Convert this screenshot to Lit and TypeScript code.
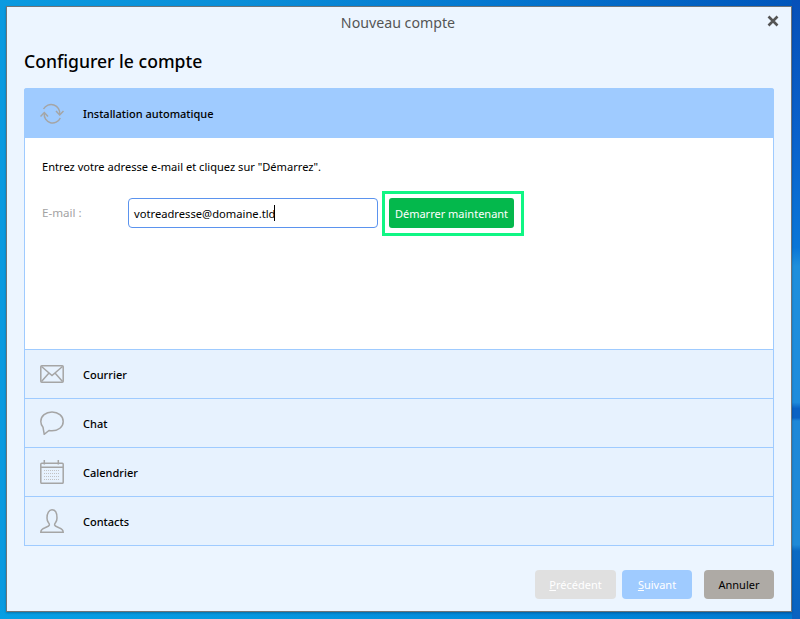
import { LitElement, html, css, svg } from "lit";
import { customElement } from "lit/decorators.js";

const icons: Record<string, unknown> = {
  sync: svg`<path d="M3.500 7A8.700 8.700 0 0 1 19.700 12.500"/><path d="M16 9l3.700 4 3.800-4"/><path d="M4.300 11.500A8.400 8.400 0 0 0 20.300 16"/><path d="M.5 14.500l3.800-4 3.700 4"/>`,
  mail: svg`<rect x=".8" y="3.800" width="22.400" height="16.400" rx="1"/><path d="M1.500 4.500l10.500 9 10.500-9M1.500 19.500l7.500-8.500M22.500 19.500L15 11"/>`,
  chat: svg`<path d="M3 16.200C1.700 14.700 .8 12.700.8 10.500.8 5 5.800 1 12 1s11.200 4 11.200 9.500S18.200 19.800 12 19.800c-1 0-2-.1-3-.3L4.200 23.300z"/>`,
  cal: svg`<rect x=".8" y="3.300" width="22.400" height="20" rx="1"/><path d="M1 7.300h22M4.300 0v4.500M18.300 0v4.500"/><path class="dots" d="M4 10.500h16M4 13.500h16M4 16.500h16M4 19.500h16"/>`,
  user: svg`<path d="M.8 23.200c0-2.700 2-3.700 4.200-4.500 2-.8 4-1.200 4.400-2.700.2-.8-.3-1.600-1-2.500C7.500 12.300 7 10.900 7 9 7 4 9 .8 12 .8S17 4 17 9c0 1.900-.5 3.300-1.400 4.500-.7.900-1.200 1.700-1 2.500.4 1.500 2.400 1.900 4.400 2.700 2.200.8 4.200 1.800 4.200 4.500z"/>`,
};

@customElement("app-root")
export class AppRoot extends LitElement {
  static styles = css`
    :host { display: block; width: 800px; height: 619px; overflow: hidden; font-family: "Noto Sans", "Open Sans", sans-serif; font-size: 11.1px; color: #000; }
    .desk {
      box-sizing: border-box; height: 619px; padding: 6px 8px 7px 6px;
      background:
        linear-gradient(180deg, #0650b8 0%, #0a62cc 22%, #0a76d8 40%, #1e8fdc 43%, #1e8cdc 65%, #0a62c4 66%, #0a62c4 67.500%, #1e88d8 68%, #1e8ad8 88%, #0a6ac4 89%, #0a62c0 100%) right top / 8px 100% no-repeat,
        linear-gradient(180deg, transparent 97%, rgba(0, 165, 234, .5) 100%),
        linear-gradient(90deg, #0a9ae0 0%, #0a8ed8 30%, #0478d0 60%, #0055bb 100%);
    }
    .win { box-sizing: border-box; height: 606px; border: 1px solid #6f7478; background: #ecf5ff; display: flex; flex-direction: column; padding: 0 17px; position: relative; box-shadow: 0 1px 2px rgba(0, 0, 0, .25); }
    .title { height: 30px; padding-right: 2px; display: flex; align-items: center; justify-content: center; font-size: 14.200px; color: #555; }
    .close { position: absolute; right: 12px; top: 8px; width: 12px; height: 12px; }
    .close path { stroke: #555; stroke-width: 2.600; fill: none; }
    h1 { margin: 13px 0 0; height: 38px; font-size: 17.600px; font-weight: 500; line-height: 22px; }
    .acc { border: 1px solid #9fcbff; border-top: 0; border-radius: 3px 3px 0 0; display: flex; flex-direction: column; background: #e7f2fe; }
    .row { box-sizing: border-box; height: 49px; display: flex; align-items: center; padding-left: 15px; gap: 19px; font-size: 11px; font-weight: 500; border-top: 1px solid #9fcbff; }
    .row:first-child { height: 50px; background: #9fcbff; border-radius: 3px 3px 0 0; margin: 0 -1px; padding-left: 16px; }
    .row svg { width: 24px; height: 24px; fill: none; stroke: #a5a5a5; stroke-width: 1.500; flex: none; }
    .row .dots { stroke: #c2c2c2; stroke-dasharray: 1 1; stroke-width: 1; }
    .body { box-sizing: border-box; height: 211px; background: #fff; padding: 21px 17px 0; }
    .body p { margin: 0; line-height: 16px; }
    .form { display: flex; align-items: flex-start; margin-top: 16px; }
    .form label { width: 86px; color: #a3a3a3; flex: none; line-height: 30px; margin-top: 7px; font-size: 11.600px; }
    .input { box-sizing: border-box; width: 250px; height: 30px; margin-top: 7px; border: 1px solid #5b93ee; border-radius: 4px; padding-left: 5px; display: flex; align-items: center; font-size: 11.200px; }
    .caret { width: 1px; height: 16px; background: #000; margin-left: -1px; }
    .hl { margin-left: 4px; border: 3px solid #10f684; padding: 4px 7px 5px 4px; display: flex; }
    .go { background: #04b84c; color: #fff; height: 30px; width: 125px; border-radius: 3px; display: flex; align-items: center; justify-content: center; font-size: 11px; }
    .foot { margin-top: 24px; display: flex; justify-content: flex-end; font-size: 11px; }
    .btn { box-sizing: border-box; height: 29px; border-radius: 4px; display: flex; align-items: center; justify-content: center; }
    .prev { width: 81px; background: #e0e0e0; color: #fff; }
    .next { width: 70px; background: #9fcbff; color: #fff; margin-left: 6px; }
    .cancel { width: 70px; background: #aeaaa5; margin-left: 12px; }
    u { text-decoration: underline; }
  `;

  render() {
    const rows = [["mail", "Courrier"], ["chat", "Chat"], ["cal", "Calendrier"], ["user", "Contacts"]];
    return html`<div class="desk"><div class="win">
      <div class="title">Nouveau compte</div>
      <svg class="close" viewBox="0 0 12 12"><path d="M1.500 1.500l9 9M10.500 1.500l-9 9"/></svg>
      <h1>Configurer le compte</h1>
      <div class="acc">
        <div class="row"><svg viewBox="0 0 24 24">${icons.sync}</svg>Installation automatique</div>
        <div class="body">
          <p>Entrez votre adresse e-mail et cliquez sur "Démarrez".</p>
          <div class="form">
            <label>E-mail :</label>
            <div class="input">votreadresse@domaine.tld<span class="caret"></span></div>
            <div class="hl"><div class="go">Démarrer maintenant</div></div>
          </div>
        </div>
        ${rows.map(([i, t]) => html`<div class="row"><svg viewBox="0 0 24 24">${icons[i]}</svg>${t}</div>`)}
      </div>
      <div class="foot">
        <div class="btn prev"><span><u>P</u>récédent</span></div>
        <div class="btn next"><span><u>S</u>uivant</span></div>
        <div class="btn cancel">Annuler</div>
      </div>
    </div></div>`;
  }
}
